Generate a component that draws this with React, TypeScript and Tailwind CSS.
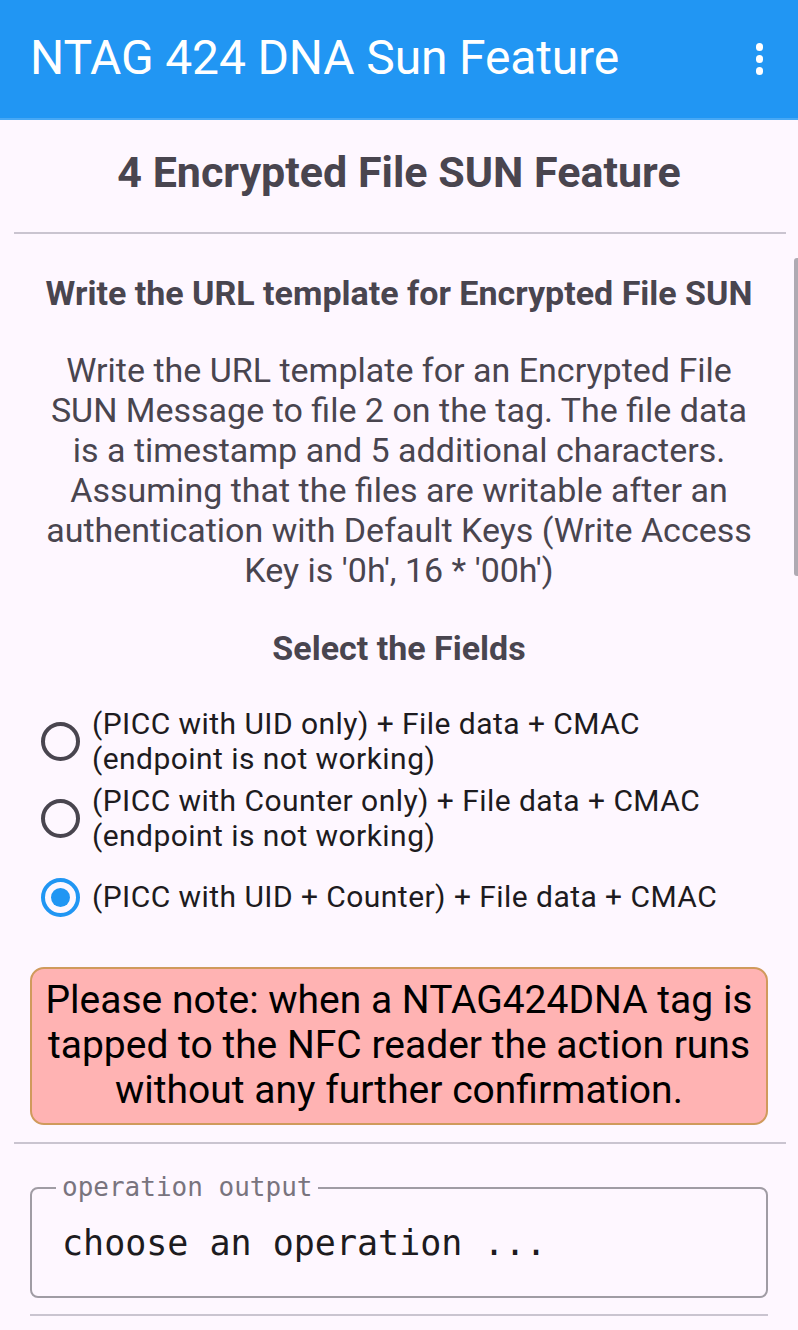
import React from "react";

const Radio = ({ checked }: { checked?: boolean }) => (
  <div
    className={
      "w-[39px] h-[39px] shrink-0 rounded-full border-[4px] flex items-center justify-center " +
      (checked ? "border-[#2196F3]" : "border-[#49454F]")
    }
  >
    {checked && <div className="w-[19px] h-[19px] rounded-full bg-[#2196F3]" />}
  </div>
);

export default function App() {
  const roboto = { fontFamily: "Roboto, 'Noto Sans', sans-serif" };
  const mono = { fontFamily: "'DejaVu Sans Mono', 'Liberation Mono', monospace" };
  return (
    <div className="relative w-[798px] h-[1330px] overflow-hidden bg-[#FEF7FF]" style={roboto}>
      {/* App bar */}
      <div className="h-[120px] bg-[#2196F3] flex items-center pl-[30px] pr-[35px] border-b-[2px] border-[#47A8F5]">
        <div className="flex-1 text-white text-[48px] leading-none pb-[2px] tracking-[-0.15px]">
          NTAG 424 DNA Sun Feature
        </div>
        <div className="flex flex-col items-center gap-[4.5px]">
          <div className="w-[7.5px] h-[7.5px] rounded-full bg-white" />
          <div className="w-[7.5px] h-[7.5px] rounded-full bg-white" />
          <div className="w-[7.5px] h-[7.5px] rounded-full bg-white" />
        </div>
      </div>

      <div className="px-[14px]">
        <div className="h-[112px] flex items-center justify-center text-[43px] font-bold text-[#49454F] pb-[8px]">
          4 Encrypted File SUN Feature
        </div>
        <div className="h-[2px] w-[772px] bg-[#CAC4D0]" />

        <div className="pt-[39px] text-center text-[34px] leading-[40px] font-bold text-[#49454F]">
          Write the URL template for Encrypted File SUN
        </div>
        <div className="pt-[37px] px-[20px] text-center text-[34px] leading-[40px] text-[#49454F]">
          Write the URL template for an Encrypted File SUN Message to file 2 on the tag. The file data is a
          timestamp and 5 additional characters. Assuming that the files are writable after an authentication
          with Default Keys (Write Access Key is '0h', 16 * '00h')
        </div>
        <div className="pt-[38px] text-center text-[34px] leading-[40px] font-bold text-[#49454F]">
          Select the Fields
        </div>

        <div className="pt-[36px] pl-[27px] flex flex-col text-[30px] leading-[35px] text-[#1D1B20] tracking-[0.45px]">
          <div className="flex items-center gap-[12px] h-[75px]">
            <Radio />
            <div className="pb-[2px]">
              (PICC with UID only) + File data + CMAC
              <br />
              (endpoint is not working)
            </div>
          </div>
          <div className="flex items-center gap-[12px] h-[77px] pt-[2px]">
            <Radio />
            <div className="pb-[2px]">
              (PICC with Counter only) + File data + CMAC
              <br />
              (endpoint is not working)
            </div>
          </div>
          <div className="flex items-center gap-[12px] h-[76px] pt-[6px]">
            <Radio checked />
            <div className="pb-[2px]">(PICC with UID + Counter) + File data + CMAC</div>
          </div>
        </div>

        <div className="mt-[35px] mx-[16px] h-[158px] rounded-[14px] border-[2px] border-[#D09A5C] bg-[#FFB3B3] flex items-center justify-center text-center text-[39px] leading-[45px] text-black">
          <div className="pb-[2px]">
            Please note: when a NTAG424DNA tag is
            <br />
            tapped to the NFC reader the action runs
            <br />
            without any further confirmation.
          </div>
        </div>

        <div className="mt-[17px] h-[2px] w-[772px] bg-[#CAC4D0]" />

        <div className="relative mt-[43px] mx-[16px] h-[111px] rounded-[8px] border-[2px] border-[#A09CA4] flex items-center pl-[30px]">
          <div
            className="absolute left-[24px] top-[-18px] px-[6px] bg-[#FEF7FF] text-[26px] leading-[32px] text-[#79747E]"
            style={mono}
          >
            operation output
          </div>
          <div className="text-[35px] leading-none text-[#1D1B20] pt-[2px]" style={mono}>
            choose an operation ...
          </div>
        </div>

        <div className="mt-[16px] mx-[16px] h-[2px] bg-[#CAC4D0]" />
      </div>

      {/* scrollbar */}
      <div className="absolute right-0 top-[258px] w-[4px] h-[318px] rounded-l-[3px] bg-[#AFAAB3]" />
    </div>
  );
}
